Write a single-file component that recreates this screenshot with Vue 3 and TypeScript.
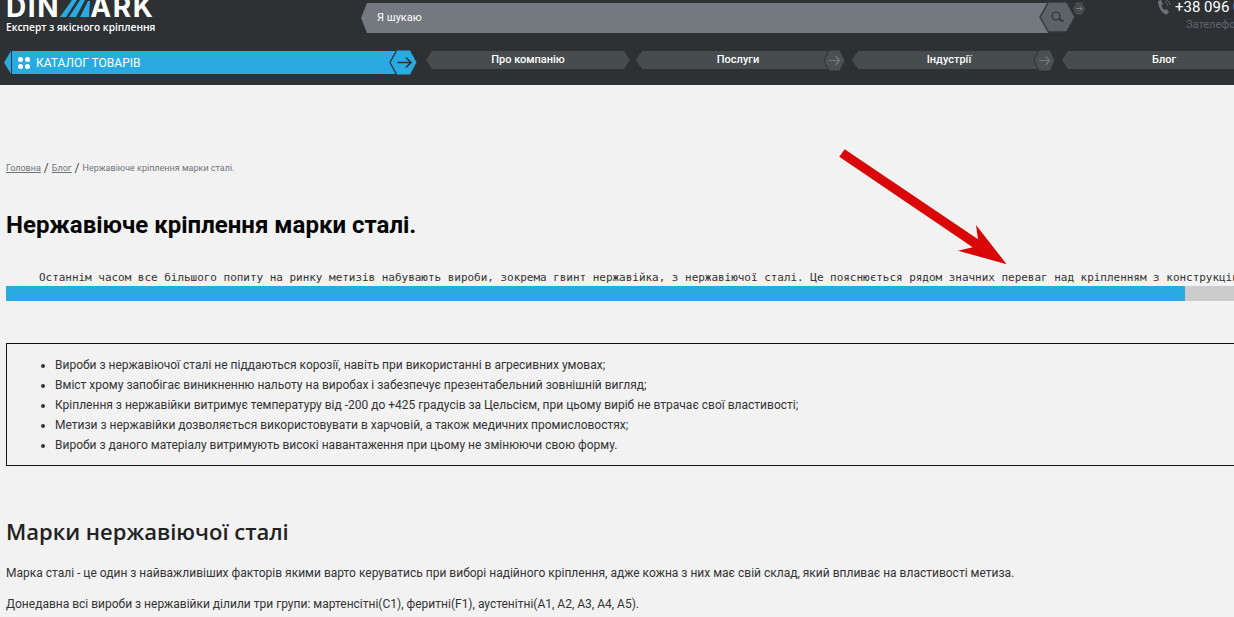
<script setup lang="ts">
interface NavItem {
  label: string
  arrow: boolean
}

const navItems: NavItem[] = [
  { label: 'Про компанію', arrow: false },
  { label: 'Послуги', arrow: true },
  { label: 'Індустрії', arrow: true },
  { label: 'Блог', arrow: false }
]

const benefits: string[] = [
  'Вироби з нержавіючої сталі не піддаються корозії, навіть при використанні в агресивних умовах;',
  'Вміст хрому запобігає виникненню нальоту на виробах і забезпечує презентабельний зовнішній вигляд;',
  'Кріплення з нержавійки витримує температуру від -200 до +425 градусів за Цельсієм, при цьому виріб не втрачає свої властивості;',
  'Метизи з нержавійки дозволяється використовувати в харчовій, а також медичних промисловостях;',
  'Вироби з даного матеріалу витримують високі навантаження при цьому не змінюючи свою форму.'
]

const intro =
  'Останнім часом все більшого попиту на ринку метизів набувають вироби, зокрема гвинт нержавійка, з нержавіючої сталі. Це пояснюється рядом значних переваг над кріпленням з конструкційної сталі.'
</script>

<template>
  <div class="page">
    <header class="header">
      <div class="top-row">
        <div class="logo">
          <div class="logo-word">
            DIN<svg class="logo-m" viewBox="0 0 30 17">
              <path d="M0 17 L12 0 H17 L6 17 Z M9 17 L20 0 H25 L16 17 Z M20 17 L28 1 H30 L29 17 Z" fill="#29abe2" />
            </svg>ARK
          </div>
          <div class="logo-sub">Експерт з якісного кріплення</div>
        </div>

        <div class="search">
          <div class="search-field">Я шукаю</div>
          <svg viewBox="0 0 37 32" class="search-hex">
            <path d="M1 16 L9.5 1 H27.5 L36 16 L27.5 31 H9.5 Z" fill="#5d6266" stroke="#33373a" stroke-width="1.4" />
            <circle cx="17" cy="15" r="4" fill="none" stroke="#2d3134" stroke-width="1.2" />
            <path d="M20 18 L24.5 20.5" stroke="#2d3134" stroke-width="1.6" />
          </svg>
          <svg viewBox="0 0 12 13" class="search-go">
            <path d="M0.5 6.5 L3.2 1 H8.8 L11.5 6.5 L8.8 12 H3.2 Z" fill="#44484b" stroke="#5d6266" stroke-width="0.6" />
            <path d="M3 6.5 H9 M6.6 4 L9 6.5 L6.6 9" fill="none" stroke="#7c8184" stroke-width="0.9" />
          </svg>
        </div>

        <div class="phone">
          <div class="phone-line">
            <svg viewBox="0 0 14 16" class="phone-icon">
              <path d="M1 2 L4 1 L6 5 L4.5 6.5 C5 8.5 6 10 7.5 11 L9.5 10 L12 13.5 L9.5 15.5 C5 15 1 8 1 2 Z" fill="#6d7276" />
              <path d="M8 3 C9.5 3.5 10.5 5 10.5 6.5 M8.5 0.8 C11 1.2 12.8 3.5 12.8 6" fill="none" stroke="#6d7276" stroke-width="0.9" />
            </svg>
            <span>+38 096 000 00 00</span>
          </div>
          <div class="phone-note">Зателефонувати</div>
        </div>
      </div>

      <nav class="nav-row">
        <div class="catalog">
          <span class="catalog-tip"></span>
          <div class="catalog-body">
            <span class="dots"><i></i><i></i><i></i><i></i></span>
            <span>КАТАЛОГ ТОВАРІВ</span>
          </div>
          <svg viewBox="0 0 28 25" class="catalog-hex">
            <path d="M1 12.5 L7.5 0.5 H21 L27.5 12.5 L21 24.5 H7.5 Z" fill="#29abe2" />
            <path d="M7.5 0.5 L1 12.5 L7.5 24.5" fill="none" stroke="#2d3134" stroke-width="1.3" />
            <path d="M8.5 12.5 H22 M17 7.5 L22 12.5 L17 17.5" fill="none" stroke="#2d3134" stroke-width="1.6" />
          </svg>
        </div>

        <div v-for="item in navItems" :key="item.label" class="nav-item">
          <div class="nav-body"><span class="nav-label">{{ item.label }}</span></div>
          <svg v-if="item.arrow" viewBox="0 0 23 23" class="nav-hex">
            <path d="M1 11.5 L6 1 H17 L22 11.5 L17 22 H6 Z" fill="#4b5053" stroke="#2d3134" stroke-width="1" />
            <path d="M6 11.5 H16.5 M12.5 7 L16.5 11.5 L12.5 16" fill="none" stroke="#74797c" stroke-width="1.2" />
          </svg>
        </div>
      </nav>
    </header>

    <main class="content">
      <div class="breadcrumbs">
        <a>Головна</a>
        <span class="slash">/</span>
        <a>Блог</a>
        <span class="slash">/</span>
        <span>Нержавіюче кріплення марки сталі.</span>
      </div>

      <h1 class="title">Нержавіюче кріплення марки сталі.</h1>

      <pre class="intro">     {{ intro }}</pre>
      <div class="scrollbar"><div class="scrollbar-thumb"></div></div>

      <div class="benefits">
        <ul>
          <li v-for="line in benefits" :key="line">{{ line }}</li>
        </ul>
      </div>

      <h2 class="subtitle">Марки нержавіючої сталі</h2>
      <p class="para first">
        Марка сталі - це один з найважливіших факторів якими варто керуватись при виборі надійного кріплення, адже кожна з них має свій склад, який впливає на властивості метиза.
      </p>
      <p class="para">
        Донедавна всі вироби з нержавійки ділили три групи: мартенсітні(С1), феритні(F1), аустенітні(А1, А2, А3, А4, А5).
      </p>
    </main>

    <svg class="red-arrow" viewBox="0 0 180 125">
      <path d="M0.3 7.7 L5.7 0.3 L139 90.3 L137 76 L167.7 115.3 L119 101.7 L133.7 98.3 Z" fill="#d90707" />
    </svg>
  </div>
</template>

<style>
html,
body {
  margin: 0;
  overflow: hidden;
  background: #f2f2f2;
}
</style>

<style scoped>
.page {
  position: relative;
  width: 1234px;
  height: 617px;
  overflow: hidden;
  background: #f2f2f2;
  font-family: Roboto, 'Liberation Sans', sans-serif;
}

/* шапка */
.header {
  height: 85px;
  background: #2d3134;
  overflow: hidden;
}

.top-row {
  display: flex;
  height: 51px;
}

.logo {
  width: 355px;
  padding-left: 6px;
  color: #fff;
  flex-shrink: 0;
}

.logo-word {
  display: flex;
  align-items: flex-end;
  height: 19px;
  margin-top: -2px;
  font-family: Inter, 'Open Sans', sans-serif;
  font-size: 28px;
  font-weight: 700;
  line-height: 19px;
  letter-spacing: 1.6px;
  white-space: nowrap;
}

.logo-m {
  width: 30px;
  height: 17px;
  flex-shrink: 0;
}

.logo-sub {
  margin-top: 3px;
  font-family: 'Open Sans', sans-serif;
  font-size: 10.2px;
  font-weight: 600;
  line-height: 14px;
  white-space: nowrap;
}

.search {
  display: flex;
  align-items: flex-start;
  width: 728px;
  flex-shrink: 0;
  padding-top: 3px;
}

.search-field {
  width: 687px;
  height: 30px;
  flex-shrink: 0;
  padding-left: 16px;
  box-sizing: border-box;
  background: #73797f;
  color: #fff;
  font-size: 11px;
  line-height: 29px;
  clip-path: polygon(6px 0, 100% 0, 100% 100%, 6px 100%, 0 50%);
}

/* шестикутник лежить поверх поля */
.search-hex {
  position: relative;
  width: 37px;
  height: 32px;
  flex-shrink: 0;
  margin: -2px 0 0 -9px;
}

.search-go {
  position: relative;
  width: 12px;
  height: 13px;
  flex-shrink: 0;
  margin: -1px 0 0 -3px;
}

.phone {
  flex-shrink: 0;
  margin-left: 68px;
  white-space: nowrap;
}

.phone-line {
  display: flex;
  align-items: center;
  gap: 4px;
  height: 14px;
  color: #fff;
  font-size: 15px;
}

.phone-icon {
  width: 14px;
  height: 16px;
}

.phone-note {
  margin: 4px 0 0 29px;
  color: #5f666c;
  font-size: 11px;
  line-height: 14px;
}

.nav-row {
  display: flex;
  align-items: flex-start;
  gap: 6px;
}

.catalog {
  position: relative;
  display: flex;
  width: 413px;
  height: 23px;
  margin: 0 3px 0 4px;
  flex-shrink: 0;
}

.catalog-tip {
  width: 7px;
  height: 23px;
  background: #29abe2;
  clip-path: polygon(100% 0, 100% 100%, 0 50%);
  margin-right: 1px;
}

.catalog-body {
  display: flex;
  align-items: center;
  gap: 6px;
  flex: 1;
  margin-right: 20px;
  padding-left: 6px;
  background: #29abe2;
  color: #fff;
  font-size: 12px;
}

.dots {
  display: grid;
  grid-template-columns: repeat(2, 5px);
  gap: 2px;
}

.dots i {
  width: 5px;
  height: 5px;
  border-radius: 50%;
  background: #fff;
}

.catalog-hex {
  position: absolute;
  right: 0;
  top: -1px;
  width: 28px;
  height: 25px;
}

.nav-item {
  position: relative;
  width: 204px;
  height: 18px;
  flex-shrink: 0;
  color: #fff;
  font-size: 11px;
  font-weight: 500;
}

.nav-item:nth-child(3) {
  margin-right: 6px;
}

.nav-item:nth-child(4) {
  width: 194px;
  margin-right: 10px;
}

.nav-body {
  display: flex;
  align-items: center;
  justify-content: center;
  height: 18px;
  padding-bottom: 1px;
  box-sizing: border-box;
  background: #474c4f;
  clip-path: polygon(6px 0, calc(100% - 6px) 0, 100% 50%, calc(100% - 6px) 100%, 6px 100%, 0 50%);
}

.nav-label {
  white-space: nowrap;
}

.nav-hex {
  position: absolute;
  right: -6px;
  top: -2px;
  width: 23px;
  height: 23px;
}

.nav-item:nth-child(4) .nav-hex {
  right: -10px;
}

/* контент */
.content {
  width: 1300px;
  padding: 77px 0 0 6px;
  box-sizing: border-box;
}

.breadcrumbs {
  display: flex;
  align-items: center;
  gap: 3px;
  height: 12px;
  color: #70757a;
  font-size: 9px;
  line-height: 12px;
}

.breadcrumbs a {
  text-decoration: underline;
}

.slash {
  color: #444;
  font-size: 12px;
}

.title {
  margin: 36px 0 0;
  color: #050505;
  font-size: 24px;
  font-weight: 700;
  line-height: 30px;
}

.intro {
  height: 16px;
  margin: 30px 0 0;
  overflow: hidden;
  color: #333;
  font-family: 'DejaVu Sans Mono', monospace;
  font-size: 11px;
  line-height: 15px;
  letter-spacing: -0.03px;
}

.scrollbar {
  width: 1294px;
  height: 15px;
  background: #ccc;
}

.scrollbar-thumb {
  width: 1179px;
  height: 15px;
  background: #29abe2;
}

.benefits {
  height: 123px;
  margin-top: 42px;
  box-sizing: border-box;
  border: 1px solid #111;
}

.benefits ul {
  margin: 0;
  padding: 11px 0 0 48px;
  color: #333;
  font-size: 12px;
  line-height: 20px;
}

.subtitle {
  margin: 50px 0 0;
  color: #222;
  font-family: 'Open Sans', sans-serif;
  font-size: 22px;
  font-weight: 600;
  line-height: 30px;
}

.para {
  margin: 0;
  color: #333;
  font-size: 12px;
  line-height: 18px;
}

.para.first {
  margin-top: 18px;
}

.para + .para {
  margin-top: 13px;
}

.red-arrow {
  position: absolute;
  left: 839px;
  top: 149px;
  width: 180px;
  height: 125px;
}
</style>
